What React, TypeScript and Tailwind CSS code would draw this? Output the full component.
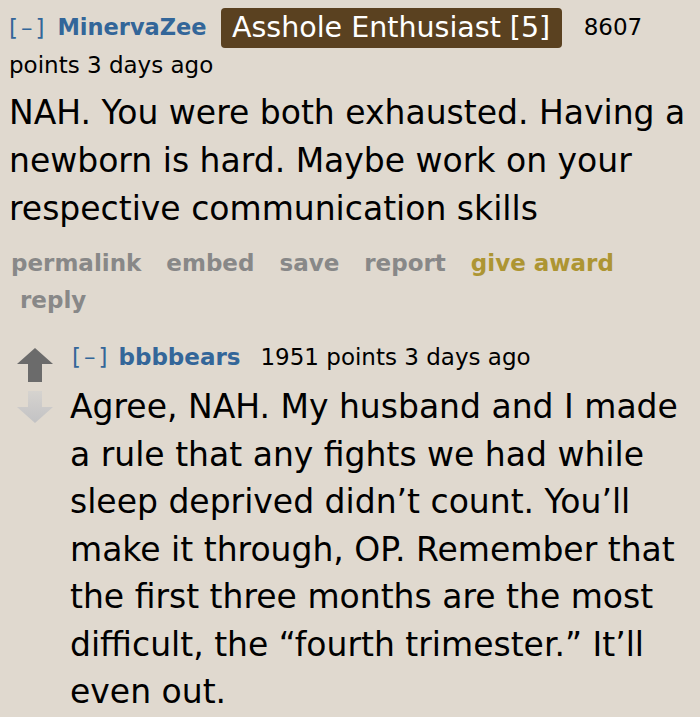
import React from "react";

const verdana = { fontFamily: '"DejaVu Sans", Verdana, sans-serif' };

export default function App() {
  return (
    <div className="w-[700px] h-[717px] bg-[#e0d9cf] overflow-hidden text-black" style={verdana}>
      <div className="pl-[9px] pt-[8px]">
        <div className="flex items-center h-[40px] text-[23px] whitespace-nowrap">
          <span className="text-[#369] tracking-[3px]">[–]</span>
          <span className="ml-[10px] font-bold text-[#369] text-[22.5px]">MinervaZee</span>
          <span className="ml-[14px] bg-[#5a4120] text-white rounded-[4px] h-[40px] w-[341px] flex items-center justify-center text-[28.5px]">
            Asshole Enthusiast [5]
          </span>
          <span className="ml-[22px] self-start mt-[2px]">8607</span>
        </div>
        <div className="text-[23px] leading-[30px] mt-[2px]">points 3 days ago</div>
        <div className="text-[33px] leading-[48px] mt-[9px] pr-[4px]">
          NAH. You were both exhausted. Having a newborn is hard. Maybe work on your respective communication skills
        </div>
        <div className="flex flex-wrap gap-x-[25px] text-[23px] font-bold leading-[37px] mt-[12px] text-[#888]">
          <span className="ml-[2px]">permalink</span>
          <span>embed</span>
          <span>save</span>
          <span>report</span>
          <span className="text-[#ad9533]">give award</span>
          <span className="ml-[11px]">reply</span>
        </div>
      </div>
      <div className="flex mt-[23px]">
        <div className="w-[70px] flex flex-col items-center pt-[6px] shrink-0">
          <svg width="36" height="34" viewBox="0 0 36 34">
            <path d="M18 0 L36 16 L25 16 L25 34 L11 34 L11 16 L0 16 Z" fill="#6b6b6b" />
          </svg>
          <svg width="36" height="32" viewBox="0 0 36 32" className="mt-[9px]">
            <defs>
              <linearGradient id="dg" x1="0" y1="0" x2="0" y2="1">
                <stop offset="0" stopColor="#d6d3cf" />
                <stop offset="1" stopColor="#c2c2c4" />
              </linearGradient>
            </defs>
            <path d="M11 0 L25 0 L25 16 L36 16 L18 32 L0 16 L11 16 Z" fill="url(#dg)" />
          </svg>
        </div>
        <div className="flex-1 pr-[4px]">
          <div className="flex items-center text-[23px] leading-[30px] whitespace-nowrap ml-[2px]">
            <span className="text-[#369] tracking-[3px]">[–]</span>
            <span className="ml-[8px] font-bold text-[#369]">bbbbears</span>
            <span className="ml-[20px]">1951 points 3 days ago</span>
          </div>
          <div className="text-[33px] leading-[47.5px] mt-[11px]">
            Agree, NAH. My husband and I made a rule that any fights we had while sleep deprived didn’t count. You’ll make it through, OP. Remember that the first three months are the most difficult, the “fourth trimester.” It’ll even out.
          </div>
        </div>
      </div>
    </div>
  );
}
